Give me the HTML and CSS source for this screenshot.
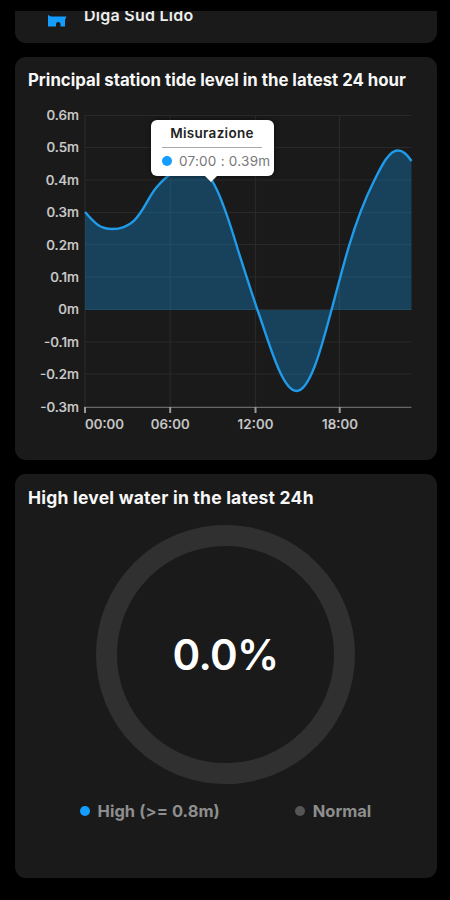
FILE: index.html
```html
<!DOCTYPE html>
<html lang="en">
<head>
<meta charset="utf-8">
<title>Tide levels</title>
<link rel="stylesheet" href="styles.css">
</head>
<body>
<main class="screen">
  <section class="card station">
    <svg class="station-icon" width="19" height="12" viewBox="0 0 19 12"><path d="M0 0 3 1.5H18.5L17 5V11.5H12.5V9Q12.5 7 10.3 7T8 9V11.5H0Z"/></svg>
    <span class="station-name">Diga Sud Lido</span>
  </section>
  <section class="card tide">
    <h2 class="title tide-title">Principal station tide level in the latest 24 hour</h2>
    <div class="chart">
      <svg class="plot" width="422" height="340" viewBox="15 100 422 340">
        <g class="grid">
          <path d="M85 115.5H411.5M85 147.5H411.5M85 180H411.5M85 212.5H411.5M85 244.5H411.5M85 277H411.5M85 309.5H411.5M85 342H411.5M85 374H411.5M85 115V407M170.2 115V407M255.5 115V407M339.5 115V407"/>
        </g>
        <path class="area" d="M85 212C94 222 99 229 112 229C139 229 143 204 156 188C166 176 176 168 190 168C203 168 210 176 215 186C224 203 231 227 238 250C246 275 252 294 257.5 310C269 342 282 391 296.5 391C311 391 323 341 331.5 310C338 286 343 266 349 246C358 216 366 197 374 181C382 165 389 150.5 398 150.5C403 150.5 407 154 411.5 161V310H85Z"/>
        <path class="line" d="M85 212C94 222 99 229 112 229C139 229 143 204 156 188C166 176 176 168 190 168C203 168 210 176 215 186C224 203 231 227 238 250C246 275 252 294 257.5 310C269 342 282 391 296.5 391C311 391 323 341 331.5 310C338 286 343 266 349 246C358 216 366 197 374 181C382 165 389 150.5 398 150.5C403 150.5 407 154 411.5 161"/>
        <path class="axis" d="M84 407.3H411.5"/>
        <path class="ticks" d="M85 407V413M170.2 407V413M255.5 407V413M339.7 407V413"/>
        <g class="labels y-labels">
          <text x="79" y="120">0.6m</text>
          <text x="79" y="152.4">0.5m</text>
          <text x="79" y="184.8">0.4m</text>
          <text x="79" y="217.2">0.3m</text>
          <text x="79" y="249.6">0.2m</text>
          <text x="79" y="282">0.1m</text>
          <text x="79" y="314.4">0m</text>
          <text x="79" y="346.8">-0.1m</text>
          <text x="79" y="379.2">-0.2m</text>
          <text x="79" y="411.6">-0.3m</text>
        </g>
        <g class="labels x-labels">
          <text x="104.5" y="429.3" textLength="39">00:00</text>
          <text x="170.2" y="429.3" textLength="39">06:00</text>
          <text x="255.5" y="429.3" textLength="36">12:00</text>
          <text x="340" y="429.3" textLength="36">18:00</text>
        </g>
      </svg>
      <div class="tooltip">
        <div class="tooltip-title">Misurazione</div>
        <div class="tooltip-row"><i class="tooltip-dot"></i><span>07:00 : 0.39m</span></div>
      </div>
    </div>
  </section>
  <section class="card high">
    <h2 class="title high-title">High level water in the latest 24h</h2>
    <div class="ring"><span class="percent">0.0%</span></div>
    <div class="legend">
      <div class="key"><i class="dot dot-high"></i><span class="key-high">High (&gt;= 0.8m)</span></div>
      <div class="key"><i class="dot dot-normal"></i><span class="key-normal">Normal</span></div>
    </div>
  </section>
</main>
</body>
</html>
```
FILE: styles.css
```css
* { box-sizing: border-box; }
body { margin: 0; background: #000; font-family: Inter, "Liberation Sans", sans-serif; }
.screen { height: 900px; padding: 11px 13.5px 0 14.5px; overflow: hidden; }
.card { background: #1a1a1a; border-radius: 11px; overflow: hidden; }
.station { height: 31.5px; border-radius: 0 0 11px 11px; display: flex; align-items: flex-start; padding-left: 33px; gap: 17.5px; }
.station-icon { margin-top: 4px; fill: #159cff; flex: none; }
.station-name { margin-top: -6px; font-size: 16px; line-height: 20px; font-weight: 600; color: #eee; letter-spacing: 0.25px; white-space: nowrap; }
.tide { height: 403px; margin-top: 14.5px; }
.high { height: 404px; margin-top: 14px; }
.title { margin: 0; padding: 12px 0 0 13.5px; line-height: 22px; font-weight: 700; color: #f7f7f7; white-space: nowrap; }
.tide-title { font-size: 16.8px; letter-spacing: 0; }
.high-title { line-height: 23px; font-size: 17.5px; letter-spacing: 0.22px; }
.chart { position: relative; margin-top: 9px; }
.plot { display: block; }
.grid { stroke: #292929; stroke-width: 1.2; fill: none; }
.area { fill: #1493e2; fill-opacity: 0.33; }
.line { fill: none; stroke: #209be9; stroke-width: 2.4; }
.axis { stroke: #686868; stroke-width: 1.2; }
.ticks { stroke: #999; stroke-width: 2; }
.labels { fill: #ccc; font-size: 13.5px; font-weight: 500; stroke: #ccc; stroke-width: 0.2; }
.y-labels { text-anchor: end; }
.x-labels { text-anchor: middle; }
.tooltip { position: absolute; left: 136.5px; top: 20px; width: 123px; height: 56px; background: #fff; border-radius: 6px; padding: 3px 4px 0 11px; box-shadow: 0 0 4px #0008; }
.tooltip::after { content: ""; position: absolute; left: 54px; top: 55.5px; border: 6px solid transparent; border-top-color: #fff; border-bottom: 0; }
.tooltip-title { width: 100px; height: 25px; border-bottom: 1px solid #aaa; color: #222; text-align: center; font-size: 13.5px; line-height: 21px; font-weight: 600; letter-spacing: 0.3px; }
.tooltip-row { display: flex; align-items: center; height: 26px; gap: 7px; color: #777; font-size: 13.5px; letter-spacing: 0.25px; white-space: nowrap; }
.tooltip-dot { width: 10px; height: 10px; border-radius: 50%; background: #159cff; flex: none; }
.ring { width: 259px; height: 259px; margin: 16px 0 0 81.5px; border: 21.5px solid #303030; border-radius: 50%; display: flex; align-items: center; justify-content: center; }
.percent { color: #fff; font-size: 42px; line-height: 50px; font-weight: 600; letter-spacing: -0.7px; white-space: nowrap; }
.legend { display: flex; gap: 75px; margin: 16px 0 0 65px; }
.key { display: flex; align-items: center; gap: 8px; color: #8e8e8e; font-size: 16.5px; line-height: 22px; font-weight: 700; white-space: nowrap; }
.key-high { letter-spacing: 0.05px; }
.key-normal { letter-spacing: -0.05px; }
.dot { width: 10px; height: 10px; border-radius: 50%; }
.dot-high { background: #159cff; }
.dot-normal { background: #555; }
```
